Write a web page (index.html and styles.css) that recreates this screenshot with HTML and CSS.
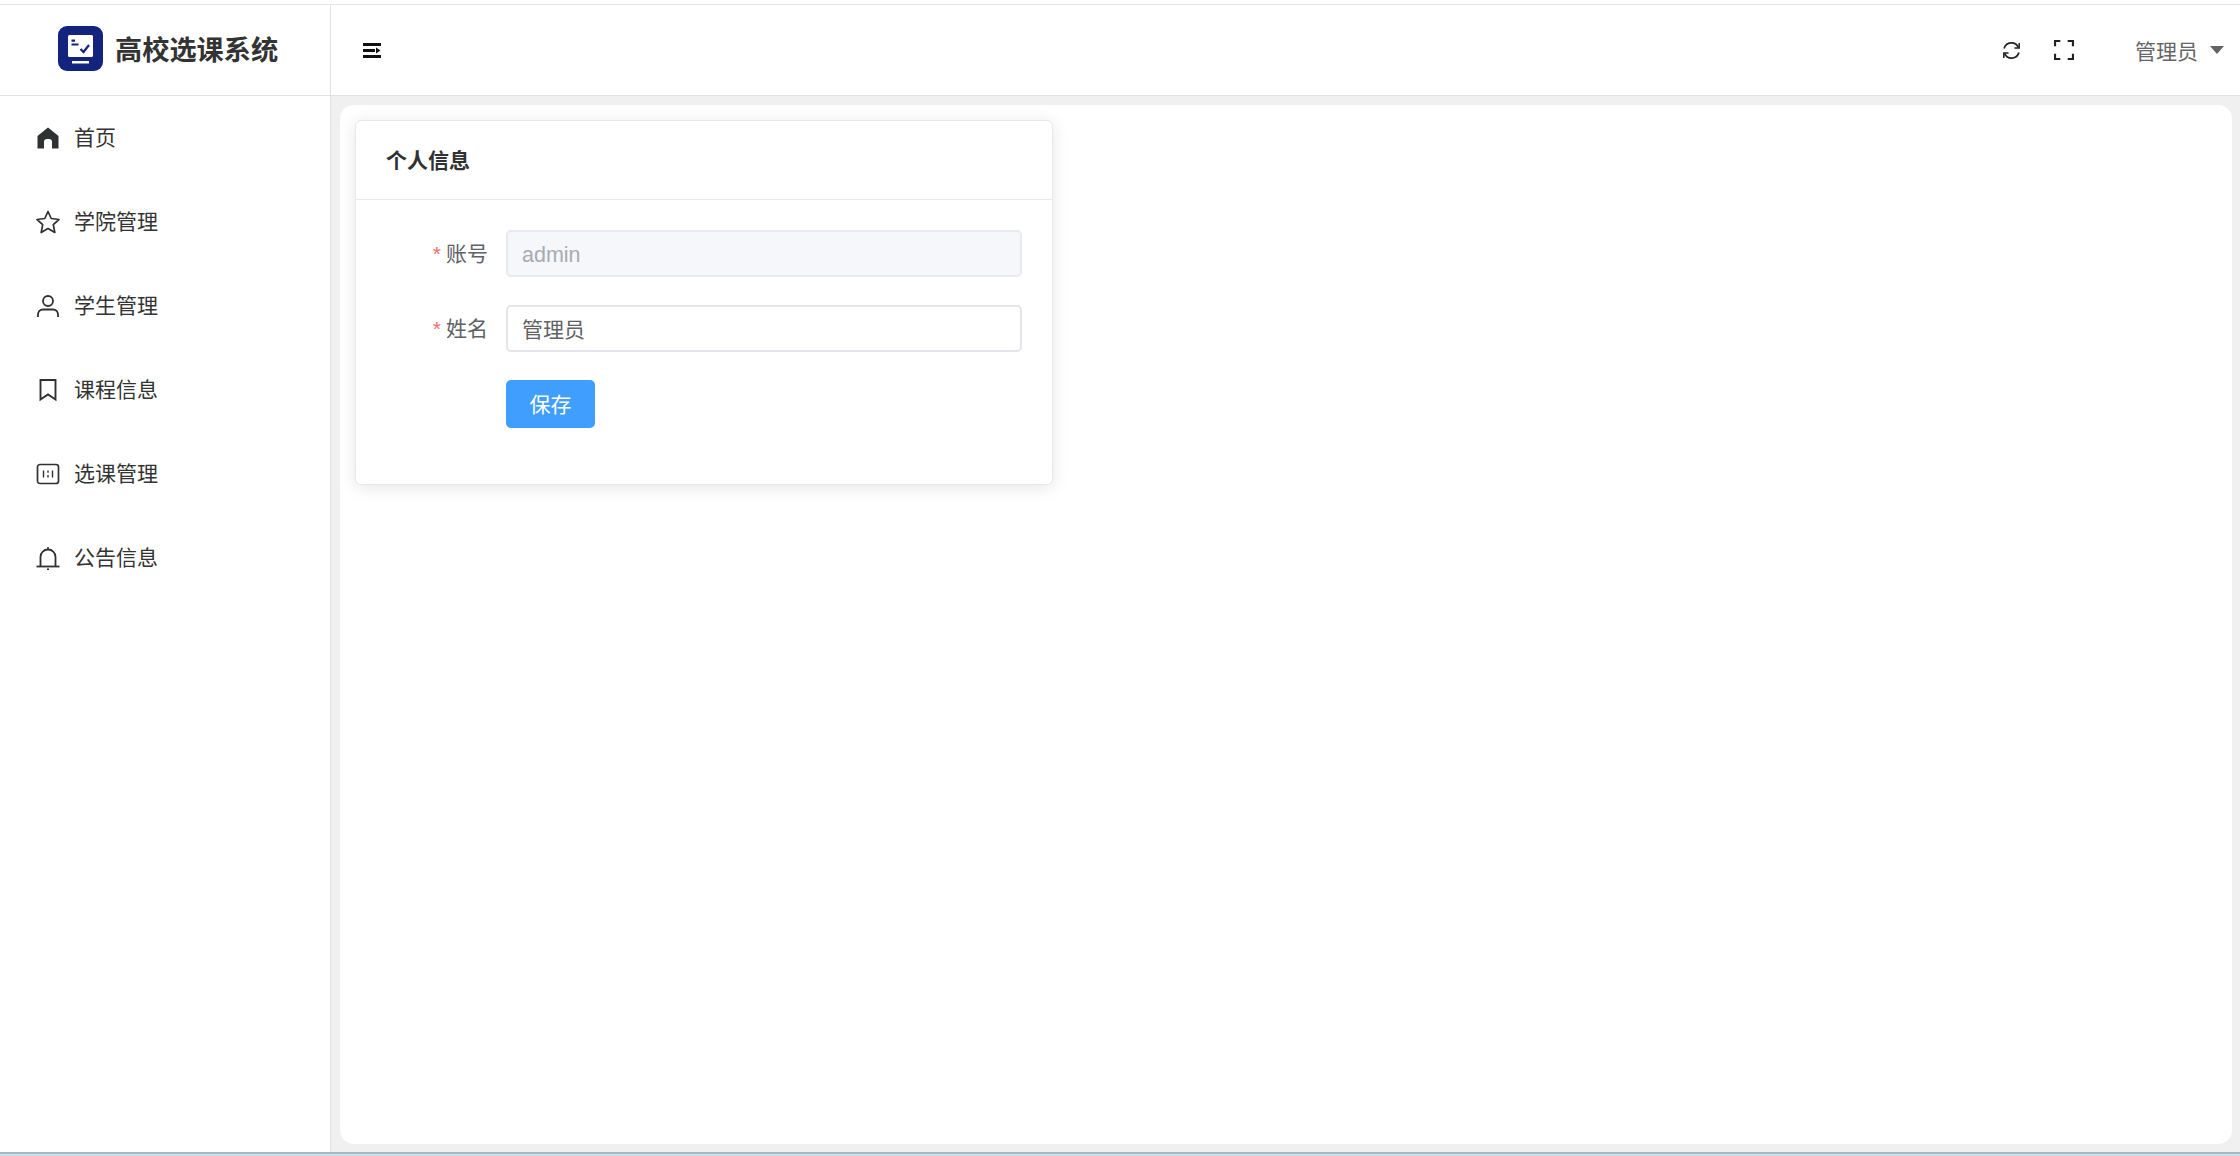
FILE: index.html
```html
<!DOCTYPE html>
<html lang="zh-CN">
<head>
<meta charset="utf-8">
<title>高校选课系统</title>
<link rel="stylesheet" href="styles.css">
</head>
<body>
<div class="app">
  <div class="brand">
    <svg class="logo" viewBox="0 0 45 45"><rect width="45" height="45" rx="9" fill="#14247e"/><path d="M10 10.500a1.500 1.500 0 0 1 1.500-1.500h22a1.500 1.500 0 0 1 1.500 1.500v19a1.500 1.500 0 0 1-1.500 1.500h-22a1.500 1.500 0 0 1-1.500-1.500z" fill="#fff"/><rect x="14" y="35" width="17" height="2.500" fill="#fff"/><path d="M13.500 13.500h3.500v2.200h-3.500zM13.500 17.500h7v2h-7z" fill="#14247e"/><path d="M22.500 23l3 3 5.500-7" fill="none" stroke="#14247e" stroke-width="2.200"/></svg>
    <span class="brand-name">高校选课系统</span>
  </div>
  <header class="topbar">
    <svg class="burger" viewBox="0 0 18 15"><path d="M0 1.500h18M0 7.500h12M0 13.500h18" stroke="#111" stroke-width="2.800" fill="none"/><path d="M13 4.500L17.500 7.500 13 10.500z" fill="#111"/></svg>
    <div class="tools">
      <svg class="tool refresh" viewBox="0 0 18 18"><path d="M2 7A7.200 7.200 0 0 1 15.500 6M16 11A7.200 7.200 0 0 1 2.500 12" fill="none" stroke="#222" stroke-width="1.700"/><path d="M16.300 2v4.700h-4.500M1.700 16v-4.700h4.500" fill="none" stroke="#222" stroke-width="1.400"/></svg>
      <svg class="tool full" viewBox="0 0 19 19"><path d="M1 6V1h5M13 1h5v5M18 13v5h-5M6 18H1v-5" fill="none" stroke="#222" stroke-width="2"/></svg>
      <div class="user"><span class="user-name">管理员</span><i class="caret"></i></div>
    </div>
  </header>
  <nav class="side">
    <a class="item"><svg class="ico" viewBox="-1 -1 24 24"><path d="M11 0.500L21.500 9v12.500h-6.500v-6.500a3 3 0 0 0-3-3h-2a3 3 0 0 0-3 3v6.500H0.500V9z" fill="#303133"/></svg><span class="item-text">首页</span></a>
    <a class="item"><svg class="ico" viewBox="0 0 24 24"><path d="M12 1.500l3.200 7 7.800 1-5.700 5.200 1.500 7.800-6.800-3.900-6.800 3.900 1.500-7.800L1 9.500l7.800-1z" fill="none" stroke="#303133" stroke-width="1.700" stroke-linejoin="round"/></svg><span class="item-text">学院管理</span></a>
    <a class="item"><svg class="ico" viewBox="-1 -1 24 24"><circle cx="11" cy="6" r="5" fill="none" stroke="#303133" stroke-width="1.800"/><path d="M1 22v-2.500a5 5 0 0 1 5-5h10a5 5 0 0 1 5 5V22" fill="none" stroke="#303133" stroke-width="1.800"/></svg><span class="item-text">学生管理</span></a>
    <a class="item"><svg class="ico" viewBox="-1 -1 24 24"><path d="M3.500 1h15v19.500L11 15.500l-7.500 5z" fill="none" stroke="#303133" stroke-width="1.900"/></svg><span class="item-text">课程信息</span></a>
    <a class="item"><svg class="ico" viewBox="-1 -1 24 24"><rect x="0.500" y="1.500" width="21" height="19" rx="2.500" fill="none" stroke="#303133" stroke-width="1.700"/><path d="M6.500 7.500v7M15.500 7.500v7M11 7.500v2.200M11 12v2.500" stroke="#303133" stroke-width="1.400"/></svg><span class="item-text">选课管理</span></a>
    <a class="item"><svg class="ico" viewBox="0 0 24 24"><path d="M4.500 20.500V11a7.500 7.500 0 0 1 15 0v9.500" fill="none" stroke="#303133" stroke-width="1.800"/><path d="M0.500 20.500h23" stroke="#303133" stroke-width="1.800"/><path d="M12 1v2.500M11 23.300h2" stroke="#303133" stroke-width="1.500"/></svg><span class="item-text">公告信息</span></a>
  </nav>
  <main class="main">
    <section class="card">
      <div class="card-head"><span class="card-title">个人信息</span></div>
      <form class="card-body">
        <div class="row">
          <label class="label"><b>*</b>账号</label>
          <div class="input disabled"><span class="latin">admin</span></div>
        </div>
        <div class="row">
          <label class="label"><b>*</b>姓名</label>
          <div class="input"><span class="cjk-value">管理员</span></div>
        </div>
        <div class="row">
          <div class="label"></div>
          <button class="btn" type="button">保存</button>
        </div>
      </form>
    </section>
  </main>
</div>
</body>
</html>
```

FILE: styles.css
```css
html, body {
  margin: 0;
  height: 100%;
}
body {
  background: #fff;
  font-family: "Liberation Sans", "Noto Sans CJK SC", sans-serif;
  overflow: hidden;
  padding-top: 4px;
  box-sizing: border-box;
  border-bottom: 2px solid #d0e0ea;
}
.app {
  height: 1150px;
  box-sizing: border-box;
  border-top: 1px solid #e4e4e4;
  border-bottom: 2px solid #a6b9c4;
  display: grid;
  grid-template-columns: 331px 1fr;
  grid-template-rows: 91px 1fr;
  background: #f0f0f0;
}
.brand {
  background: #fff;
  border-right: 1px solid #e2e2e2;
  border-bottom: 1px solid #e2e2e2;
  display: flex;
  align-items: center;
  padding-left: 58px;
  gap: 12px;
  padding-bottom: 3px;
}
.logo { width: 45px; height: 45px; flex: none; }
.brand-name {
  font-size: 27.2px;
  font-weight: 700;
  color: #333;
  white-space: nowrap;
  padding-bottom: 2px;
}
.topbar {
  background: #fff;
  border-bottom: 1px solid #e2e2e2;
  display: flex;
  align-items: center;
  justify-content: space-between;
  padding: 0 16px 0 32px;
}
.burger { width: 18px; height: 15px; }
.tools { display: flex; align-items: center; }
.tool { display: block; }
.refresh { width: 19px; height: 19px; margin-right: 33px; }
.full { width: 20px; height: 20px; margin-right: 61px; }
.user {
  display: flex;
  align-items: center;
  gap: 12px;
  font-size: 21px;
  color: #666;
}
.caret {
  width: 0;
  height: 0;
  border-left: 7px solid transparent;
  border-right: 7px solid transparent;
  border-top: 8px solid #606266;
  display: block;
}
.side {
  background: #fff;
  border-right: 1px solid #e2e2e2;
  display: flex;
  flex-direction: column;
}
.item {
  height: 84px;
  display: flex;
  align-items: center;
  padding-left: 36px;
  gap: 14px;
  font-size: 21px;
  color: #333;
}
.item-text { padding-bottom: 5px; }
.ico { width: 24px; height: 24px; flex: none; }
.main {
  background: #fff;
  margin: 9px 8px 8px 9px;
  border-radius: 14px;
  padding: 15px 15px;
}
.card {
  width: 698px;
  height: 365px;
  box-sizing: border-box;
  background: #fff;
  border: 1px solid #e8e8e8;
  border-radius: 6px;
  box-shadow: 0 3px 17px rgba(0, 0, 0, 0.1);
}
.card-head {
  height: 79px;
  box-sizing: border-box;
  border-bottom: 1px solid #e9ebf0;
  padding-left: 30px;
  display: flex;
  align-items: center;
  font-size: 21px;
  font-weight: 700;
  color: #303133;
}
.card-title { padding-bottom: 3px; }
.card-body {
  padding: 30px 30px 0 0;
  display: flex;
  flex-direction: column;
  gap: 28px;
}
.row {
  display: flex;
  align-items: center;
  gap: 18px;
}
.label {
  width: 132px;
  flex: none;
  text-align: right;
  font-size: 21px;
  color: #606266;
  padding-bottom: 3px;
}
.label b {
  color: #f56c6c;
  font-weight: 400;
  margin-right: 5px;
}
.input {
  flex: 1;
  height: 47px;
  box-sizing: border-box;
  border: 2px solid #e3e5ea;
  border-radius: 5px;
  padding: 0 14px;
  display: flex;
  align-items: center;
  font-size: 21px;
  color: #606266;
  background: #fff;
}
.cjk-value { padding-bottom: 2px; }
.latin { font-size: 21.5px; padding-top: 3px; }
.input.disabled {
  background: #f5f7fa;
  border-color: #e8eaef;
  color: #a8abb2;
}
.btn {
  width: 89px;
  height: 48px;
  border: 0;
  border-radius: 5px;
  background: #409eff;
  color: #fff;
  font: inherit;
  font-size: 21px;
  padding: 0 0 2px;
}
```
